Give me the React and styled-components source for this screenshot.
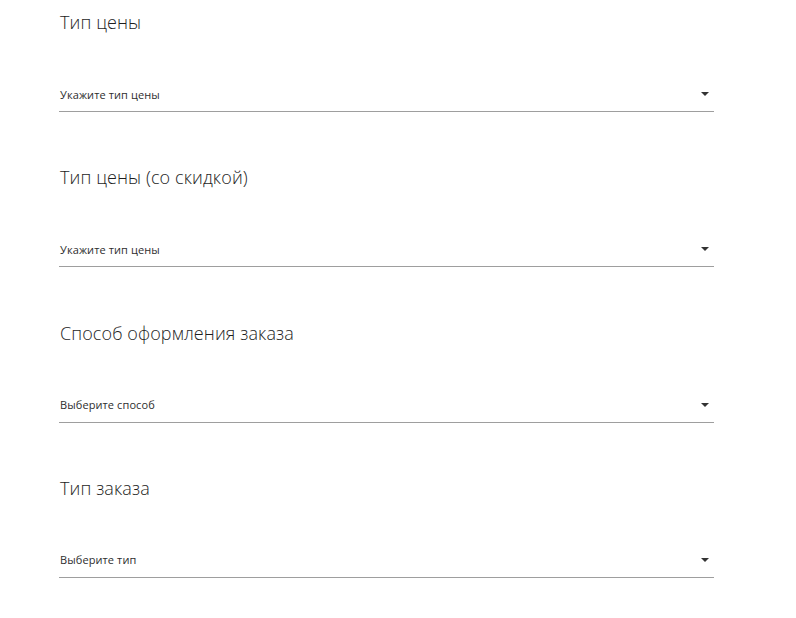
import React from "react";
import styled, { createGlobalStyle } from "styled-components";

const Global = createGlobalStyle`
  html, body { margin: 0; padding: 0; background: #fff; }
  body { font-family: "Open Sans", "Noto Sans", sans-serif; }
`;

const Page = styled.div`
  padding: 10px 0 0 59px;
  width: 655px;
  display: flex;
  flex-direction: column;
  gap: 53.33px;
`;

const Section = styled.section`
  display: flex;
  flex-direction: column;
  gap: 45px;
`;

const Title = styled.h2`
  margin: 0 0 0 1px;
  font-size: 18px;
  font-weight: 300;
  line-height: 24px;
  color: #1e1e1e;
  letter-spacing: 0.1px;
`;

const Field = styled.div`
  height: 32px;
  display: flex;
  align-items: center;
  justify-content: space-between;
  border-bottom: 1px solid #9e9e9e;
  cursor: pointer;
`;

const Placeholder = styled.span`
  margin: 0 0 2px 1px;
  font-size: 11px;
  letter-spacing: 0.1px;
  color: #2e2e2e;
`;

const Arrow = styled.svg`
  width: 8px;
  height: 4px;
  margin: 0 5px 2px 0;
  fill: #333;
`;

const sections = [
  { title: "Тип цены", placeholder: "Укажите тип цены" },
  { title: "Тип цены (со скидкой)", placeholder: "Укажите тип цены" },
  { title: "Способ оформления заказа", placeholder: "Выберите способ" },
  { title: "Тип заказа", placeholder: "Выберите тип" },
];

export default function App() {
  return (
    <>
      <Global />
      <Page>
        {sections.map((s) => (
          <Section key={s.title}>
            <Title>{s.title}</Title>
            <Field>
              <Placeholder>{s.placeholder}</Placeholder>
              <Arrow viewBox="0 0 8 4">
                <path d="M0 0h8L4 4z" />
              </Arrow>
            </Field>
          </Section>
        ))}
      </Page>
    </>
  );
}
